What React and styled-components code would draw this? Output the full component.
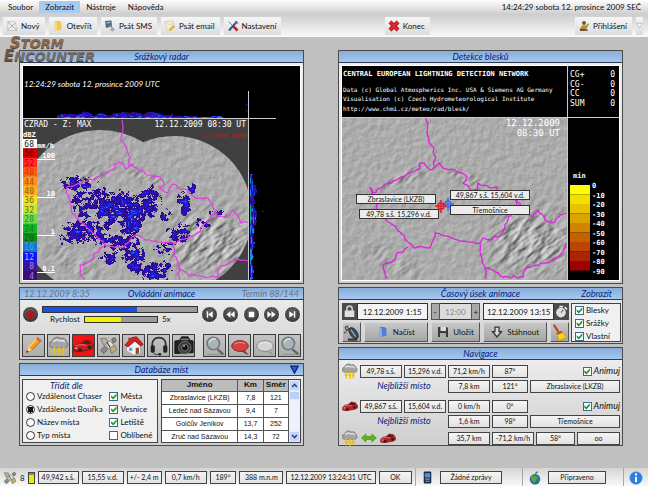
import React, { useState } from "react";
import styled, { createGlobalStyle, css } from "styled-components";

/* ---------- map data helpers ---------- */

const rand = (x, y) => {
  const n = Math.sin(x * 127.1 + y * 311.7) * 43758.5453;
  return n - Math.floor(n);
};

const noise = (x, y) => {
  const xi = Math.floor(x);
  const yi = Math.floor(y);
  const fx = x - xi;
  const fy = y - yi;
  const top = rand(xi, yi) * (1 - fx) + rand(xi + 1, yi) * fx;
  const bottom = rand(xi, yi + 1) * (1 - fx) + rand(xi + 1, yi + 1) * fx;
  return top * (1 - fy) + bottom * fy;
};

// turns a coarse border line into a ragged one
const border = (points) => {
  let d = `M${points[0][0]} ${points[0][1]}`;
  for (let i = 1; i < points.length; i++) {
    const [x0, y0] = points[i - 1];
    const [x1, y1] = points[i];
    const steps = Math.max(1, Math.round(Math.hypot(x1 - x0, y1 - y0) / 3));
    for (let s = 1; s <= steps; s++) {
      const t = s / steps;
      const wx = s < steps ? (rand(x0 + s, y1) - 0.5) * 2.4 : 0;
      const wy = s < steps ? (rand(x1, y0 + s) - 0.5) * 2.4 : 0;
      d += `L${(x0 + (x1 - x0) * t + wx).toFixed(1)} ${(y0 + (y1 - y0) * t + wy).toFixed(1)}`;
    }
  }
  return d;
};

const ECHO_COLORS = ["#2e0a86", "#2a12b0", "#1c1bdc", "#1f4cf0", "#1c90e0", "#18b080"];

// cx, cy, rx, ry, strength
const CELLS = [
  [84, 138, 20, 13, 0.78],
  [97, 143, 24, 14, 0.98],
  [107, 158, 9, 12, 0.95],
  [75, 130, 14, 9, 0.66],
  [56, 118, 16, 7, 0.74],
  [58, 136, 10, 13, 0.66],
  [60, 165, 21, 9, 0.88],
  [44, 172, 12, 5, 0.78],
  [88, 176, 15, 7, 0.76],
  [107, 174, 7, 7, 0.76],
  [126, 134, 10, 13, 0.84],
  [111, 192, 8, 13, 0.92],
  [130, 205, 15, 7, 0.82],
  [161, 136, 6, 10, 0.92],
  [155, 166, 11, 8, 0.76],
  [180, 157, 7, 5, 0.75],
  [193, 146, 6, 3, 0.75],
  [141, 181, 9, 6, 0.76],
  [140, 203, 6, 9, 0.74],
  [168, 122, 4, 4, 0.8],
  [140, 148, 6, 6, 0.7],
  [88, 192, 10, 6, 0.6],
];

const buildEchoes = () => {
  const paths = ECHO_COLORS.map(() => "");
  const put = (x, y, level) => {
    const i = Math.max(0, Math.min(ECHO_COLORS.length - 1, level));
    paths[i] += `M${x} ${y}h1v1h-1z`;
  };
  for (let y = 105; y < 214; y++) {
    for (let x = 35; x < 225; x++) {
      let value = 0;
      CELLS.forEach(([cx, cy, rx, ry, power]) => {
        const dist = ((x - cx) / rx) ** 2 + ((y - cy) / ry) ** 2;
        if (dist < 1.8) value = Math.max(value, power * (1 - dist * 0.4));
      });
      if (!value) continue;
      const v = value + noise(x / 3, y / 3) * 1.15 + rand(x, y) * 0.35 - 0.75;
      if (v > 0.55) put(x, y, Math.floor((v - 0.55) * 4.6));
    }
  }
  for (let x = 34; x < 200; x++) {
    const near = x < 150 ? 1 : 0.4;
    const h = Math.round((1 + noise(x / 5, 3) * 5 + rand(x, 9)) * near);
    for (let k = 0; k < h; k++) {
      put(x, 51 - k, Math.floor(noise(x / 3, k) * 5.4 - k * 0.6));
    }
  }
  for (let y = 108; y < 214; y++) {
    const near = y > 118 && y < 178 ? 1 : 0.55;
    const w = Math.round((2 + noise(2, y / 5) * 6 + rand(y, 4)) * near);
    for (let k = 0; k < w; k++) {
      put(227 + k, y, Math.floor(noise(k, y / 4) * 6.4 - k * 0.4));
    }
  }
  [[223, 38], [223, 39], [222, 43], [224, 44], [223, 45], [239, 145], [240, 145], [235, 139]].forEach(
    ([x, y]) => put(x, y, 1)
  );
  return paths;
};

const ECHOES = buildEchoes();

const RADAR_BORDERS = [
  [[99, 54], [100, 61], [98, 71], [102, 79], [107, 91], [106, 101], [103, 103], [101, 99], [99, 97], [91, 98], [92, 102], [89, 104], [74, 111], [61, 116], [44, 121], [43, 127], [47, 134], [49, 147], [59, 157], [74, 171], [82, 179], [101, 181], [112, 169], [127, 174], [138, 176], [151, 177], [165, 172], [175, 167], [180, 159], [188, 151], [195, 147]],
  [[82, 180], [72, 187], [69, 194], [57, 199], [57, 207], [61, 214]],
  [[106, 101], [109, 98], [116, 104], [127, 109], [137, 111], [141, 119], [136, 121], [144, 127], [150, 118], [155, 122], [165, 124], [171, 131], [185, 132], [190, 141], [193, 149], [205, 151], [210, 144], [216, 152], [218, 157], [225, 156]],
  [[151, 177], [151, 187], [156, 201], [158, 204], [168, 209], [181, 211], [195, 211], [196, 202], [215, 193], [225, 195]],
  [[156, 202], [156, 214]],
];

const LIGHTNING_BORDERS = [
  [[84, 52], [86, 57], [85, 67], [87, 77], [92, 82], [93, 94], [91, 103], [88, 104], [85, 101], [82, 97], [77, 98], [78, 102], [60, 111], [43, 119], [31, 127], [28, 121], [30, 129], [35, 137], [36, 147], [48, 157], [58, 166], [66, 176], [71, 181], [88, 182], [93, 167], [106, 170], [116, 174], [138, 177], [141, 172], [148, 174], [161, 167], [166, 154], [173, 141], [175, 134]],
  [[93, 102], [97, 97], [101, 102], [120, 107], [125, 111], [121, 117], [130, 125], [136, 123], [136, 117], [148, 122], [155, 121], [156, 126], [168, 128], [175, 136], [185, 147], [191, 151], [196, 144], [203, 154], [211, 157], [218, 149], [225, 147]],
  [[66, 181], [61, 186], [55, 187], [53, 194], [41, 199], [43, 207], [45, 213]],
  [[138, 177], [138, 187], [143, 202], [143, 213]],
  [[143, 202], [148, 203], [161, 211], [181, 211], [185, 201], [208, 196], [221, 186], [224, 177]],
];

const DBZ_SCALE = [
  ["68", "#ffffff", "#222"],
  ["56", "#d40000", "#6a0000"],
  ["52", "#ff2a2a", "#c00000"],
  ["48", "#ff5a14", "#c83c00"],
  ["44", "#ff9020", "#a85000"],
  ["40", "#ffb020", "#8a5a00"],
  ["36", "#f4e428", "#6e6a00"],
  ["32", "#c8e632", "#5c7800"],
  ["28", "#6cdc50", "#2c8c20"],
  ["24", "#18b428", "#088018"],
  ["20", "#109018", "#0a5c10"],
  ["16", "#1478c8", "#3ca0ff"],
  ["12", "#1414f0", "#b4b4ff"],
  ["8", "#3a12a0", "#a890e0"],
  ["4", "#3c0c78", "#a080d0"],
];

const AGE_COLORS = ["#ffff00", "#f4e000", "#e8c400", "#dca400", "#d08400", "#c46000", "#bc4400", "#ac2400", "#a00000"];

/* ---------- styles ---------- */

const GlobalStyle = createGlobalStyle`
  * {
    box-sizing: border-box;
  }
  body {
    margin: 0;
    background: #c0c0c0;
    color: #111;
    font-family: Lato, "Open Sans", sans-serif;
    font-size: 8px;
    line-height: 10px;
  }
  button, input, output, table {
    font: inherit;
    color: inherit;
  }
`;

const Page = styled.div`
  min-height: 100vh;
  display: flex;
  flex-direction: column;
`;

const Header = styled.header`
  position: relative;
`;

const MenuBar = styled.nav`
  display: flex;
  align-items: center;
  height: 14px;
  padding: 0 7px 0 2px;
  background: linear-gradient(#fdfdfd, #cfcfcf);
`;

const MenuItem = styled.a`
  padding: 1px 6px;
  color: #111;
  text-decoration: none;
  background: ${(p) => (p.$active ? "#a9cbf0" : "transparent")};
`;

const Clock = styled.time`
  margin-left: auto;
`;

const ToolBar = styled.div`
  display: flex;
  align-items: center;
  gap: 4px;
  height: 23px;
  padding: 0 5px 0 3px;
  background: linear-gradient(#cdcdcd, #fafafa);
`;

const ToolButton = styled.button`
  display: flex;
  align-items: center;
  justify-content: center;
  gap: 3px;
  height: 18px;
  padding: 0 5px 0 3px;
  border: 0;
  background: linear-gradient(#f6f6f6, #dcdcdc);
`;

const Spacer = styled.div`
  flex: ${(p) => p.$grow || 1};
`;

const MoreButton = styled(ToolButton)`
  padding: 0;
`;

const Logo = styled.div`
  position: absolute;
  top: 37px;
  left: 4px;
  z-index: 2;
  font: italic bold 13px/12px "DejaVu Sans", sans-serif;
  color: #8a6a4c;
  text-shadow: 0 1px 0 #4a423c;

  span {
    display: block;
  }
  b {
    font-size: 15px;
  }
  span:first-child {
    padding-left: 6px;
  }
  span + span {
    color: #77706a;
  }
  span + span b {
    color: #6c5644;
  }
`;

const Main = styled.main`
  flex: 1;
  display: grid;
  grid-template-columns: minmax(0, 1fr) minmax(0, 1fr);
  align-items: start;
  gap: 34px;
  padding: 13px 25px 22px 19px;
`;

const Column = styled.div`
  display: flex;
  flex-direction: column;
  gap: 3px;
`;

const Panel = styled.section`
  border: 1px solid #4a4a4a;
  background: linear-gradient(#f0f0f0, #cfcfcf);
`;

const TitleBar = styled.header`
  display: grid;
  grid-template-columns: 1fr auto 1fr;
  align-items: center;
  height: 12px;
  padding: 0 4px;
  border-bottom: 1px solid #2c3c54;
  background: linear-gradient(#86add8, #a6c8f0);
  color: #66748a;
  font-size: 9px;
  font-style: italic;

  > :last-child {
    justify-self: end;
  }
`;

const Title = styled.h2`
  grid-column: 2;
  margin: 0;
  color: #0c1c78;
  font: inherit;
`;

const TitleNote = styled.span`
  padding-right: ${(p) => (p.$strong ? "6px" : 0)};
  color: ${(p) => (p.$strong ? "#0c1c78" : "inherit")};
`;

const CollapseButton = styled.button`
  display: flex;
  padding: 0;
  border: 0;
  background: none;
`;

const MapFrame = styled.div`
  position: relative;
  margin: 2px;
  border: 1px solid #fff;
  background: #000;

  svg {
    display: block;
    width: 100%;
    height: auto;
  }
`;

const MapClock = styled.time`
  position: absolute;
  top: 13px;
  left: 1px;
  color: #fff;
  font-style: italic;
`;

const MapLabel = styled.span`
  position: absolute;
  left: ${(p) => p.$x}%;
  top: ${(p) => p.$y}%;
  width: 29%;
  height: 10px;
  border: 1px solid #333;
  background: #ececec;
  font-size: 7px;
  line-height: 8px;
  text-align: center;
  white-space: nowrap;
`;

/* animation */

const PlayerTop = styled.div`
  display: flex;
  align-items: center;
  gap: 3px;
  padding: 6px 2px 5px;
`;

const Tracks = styled.div`
  flex: 1;
  display: flex;
  flex-direction: column;
  gap: 2px;
`;

const SpeedRow = styled.label`
  display: flex;
  align-items: center;
  gap: 4px;
  height: 8px;
  padding-left: 8px;
`;

const Track = styled.input`
  appearance: none;
  flex: none;
  width: ${(p) => p.$width};
  height: 7px;
  margin: 0;
  border: 1px solid #333;
  background: linear-gradient(${(p) => p.$color}, ${(p) => p.$color}) no-repeat, #9c9c9c;
  background-size: ${(p) => (p.value / p.max) * 100}% 100%, auto;

  &::-webkit-slider-thumb {
    appearance: none;
    width: 0;
    height: 0;
  }
`;

const RoundButton = styled.button`
  flex: none;
  display: flex;
  align-items: center;
  justify-content: center;
  width: 17px;
  height: 17px;
  padding: 0;
  border: 1px solid #eee;
  border-radius: 50%;
  background: radial-gradient(circle at 50% 35%, #666, #2a2a2a);
`;

const Transport = styled.div`
  display: flex;
  justify-content: space-between;
  width: 100px;
`;

const IconBar = styled.div`
  display: flex;
  justify-content: space-between;
  padding: 6px 2px 2px;
`;

const IconGroup = styled.div`
  display: flex;
  gap: 2px;
`;

const IconButton = styled.button`
  display: flex;
  align-items: center;
  justify-content: center;
  width: 23px;
  height: 23px;
  padding: 0;
  border: 1px solid #3c3c3c;
  background: ${(p) => (p.$active ? "#f01414" : "linear-gradient(#c4c4c4, #adadad)")};
`;

/* places */

const Places = styled.div`
  display: grid;
  grid-template-columns: 137fr 141fr;
  gap: 3px;
  padding: 3px 2px 2px;
`;

const Box = styled.div`
  border: 1px solid #444;
  background: ${(p) => p.$bg || "#f0f0f0"};
`;

const SortBox = styled(Box)`
  display: grid;
  grid-template-columns: 84fr 51fr;
  align-content: start;
`;

const Group = styled.fieldset`
  display: flex;
  flex-direction: column;
  gap: 3px;
  min-width: 0;
  margin: 0;
  padding: ${(p) => p.$pad || "11px 0 0 3px"};
  border: 0;
`;

const Legend = styled.legend`
  float: left;
  height: 8px;
  padding: 1px 0 0 24px;
  color: #0c1c78;
  font-size: 9px;
  font-style: italic;
`;

const Option = styled.label`
  display: flex;
  align-items: center;
  gap: 2px;
  height: 10px;
  white-space: nowrap;
  font-size: ${(p) => (p.$italic ? "9px" : "8px")};
  font-style: ${(p) => (p.$italic ? "italic" : "normal")};
`;

const RadioInput = styled.input`
  appearance: none;
  flex: none;
  width: 9px;
  height: 9px;
  margin: 0;
  border: 1px solid #333;
  border-radius: 50%;
  background: #fff;

  &:checked {
    background: radial-gradient(circle, #111 0 3px, #fff 3px);
  }
`;

const CheckInput = styled.input`
  appearance: none;
  flex: none;
  width: 9px;
  height: 9px;
  margin: 0;
  border: 1px solid #3a6a90;
  background: #fff;

  &:checked::before {
    content: "";
    display: block;
    height: 7px;
    background: #1c9a2c;
    clip-path: polygon(10% 40%, 40% 65%, 90% 10%, 90% 45%, 40% 100%, 10% 70%);
  }
`;

const TableBox = styled(Box)`
  display: flex;
  height: 64px;
  overflow: hidden;
`;

const PlaceTable = styled.table`
  flex: 1;
  table-layout: fixed;
  border-collapse: collapse;
  font: 7px/8px "Liberation Sans", Arial, sans-serif;
  text-align: center;

  th,
  td {
    height: 13px;
    padding: 0;
    border-right: 1px solid #555;
    border-bottom: 1px solid #555;
    white-space: nowrap;
  }
  th {
    width: 20%;
    height: 11px;
    background: #bcbcbc;
    font-size: 8px;
  }
  th:first-child {
    width: 60%;
  }
`;

const ScrollBar = styled.div`
  display: flex;
  flex-direction: column;
  width: 11px;
  background: #eef1fa;
`;

const ScrollButton = styled.button`
  display: flex;
  align-items: center;
  justify-content: center;
  height: 11px;
  padding: 0;
  border: 1px solid #e4ecff;
  background: #c4d4fa;
`;

const ScrollThumb = styled.div`
  height: 9px;
  margin-bottom: auto;
  border: 1px solid #e4ecff;
  background: #bccffa;
`;

/* time range */

const RangeBody = styled.div`
  display: grid;
  grid-template-columns: 1fr 50px;
  gap: 2px;
  padding: 3px 1px 1px 3px;
`;

const RangeGrid = styled.div`
  display: grid;
  grid-template-columns: 86fr 50fr 86fr;
  grid-template-rows: 17px 20px;
  gap: 2px 3px;
`;

const Cell = styled.div`
  display: flex;
  gap: ${(p) => p.$gap || 0};
  min-width: 0;
`;

const DateInput = styled.input`
  flex: 1;
  min-width: 0;
  padding: 0;
  border: 1px solid #333;
  background: #f4f4f4;
  font-size: 8px;
  text-align: center;

  &:disabled {
    border-width: 1px 0;
    color: #888;
    background: #dcdcdc;
  }
`;

const DarkButton = styled.button`
  display: flex;
  align-items: center;
  justify-content: center;
  width: 15px;
  padding: 0;
  border: 0;
  background: #4c4c4c;
`;

const StepButton = styled.button`
  width: 9px;
  padding: 0;
  border: 1px solid #555;
  background: #a8a8a8;
`;

const ActionButton = styled.button`
  flex: ${(p) => (p.$square ? "0 0 19px" : "1")};
  display: flex;
  align-items: center;
  justify-content: center;
  gap: 4px;
  min-width: 0;
  padding: 0;
  border: 1px solid;
  border-color: #d8d8d8 #555 #555 #d8d8d8;
  background: linear-gradient(#c8c8c8, #a4a4a4);
`;

/* navigation */

const NavBody = styled.div`
  display: flex;
  flex-direction: column;
  gap: 2px;
  padding: 3px 2px 1px 3px;
`;

const NavRow = styled.div`
  display: grid;
  grid-template-columns: ${(p) => p.$columns || "16fr 42fr 42fr 42fr 36fr 90fr"};
  align-items: center;
  gap: 2px;
  height: 14px;
  margin-top: ${(p) => (p.$first ? "3px" : 0)};
`;

const NavIcon = styled.div`
  display: flex;
  align-items: center;
  gap: 3px;
`;

const NavCaption = styled.span`
  grid-column: span 3;
  padding-left: 20px;
  text-align: center;
  color: #0c1c78;
  font-size: 9px;
  font-style: italic;
`;

const readout = css`
  min-width: 0;
  height: 13px;
  border: 1px solid #444;
  background: linear-gradient(#f4f4f4, #e2e2e2);
  font-size: 7px;
  line-height: 11px;
  text-align: center;
  white-space: nowrap;
`;

const Readout = styled.output`
  ${readout}
  display: block;
`;

const RightOption = styled(Option)`
  justify-self: end;
`;

/* status bar */

const StatusBar = styled.footer`
  display: flex;
  height: 19px;
  background: linear-gradient(#d4d4d4, #fbfbfb);
`;

const StatusGroup = styled.div`
  display: flex;
  align-items: center;
  gap: 3px;
  flex: ${(p) => p.$flex || "none"};
  padding: 0 ${(p) => (p.$divided ? "5px" : "3px")};
  border-left: ${(p) => (p.$divided ? "1px solid #a8a8a8" : 0)};
`;

const StatusField = styled.output`
  ${readout}
  flex: ${(p) => p.$w} 1 0;
  max-width: ${(p) => p.$max || "none"};
  margin-left: ${(p) => (p.$max ? "3px" : 0)};
`;

const Battery = styled.div`
  width: 7px;
  height: 12px;
  border: 1px solid #444;
  background: linear-gradient(#888 20%, #f0e800 20%);
`;

/* ---------- icons ---------- */

const Icon = ({ size = 12, width, children }) => (
  <svg width={width || size} height={size} viewBox={`0 0 ${width ? (24 * width) / size : 24} 24`} fill="none" aria-hidden="true">
    {children}
  </svg>
);

const StormIcon = ({ size = 18 }) => (
  <Icon size={size}>
    <path d="M5 14a4 4 0 0 1-1-8 6 6 0 0 1 10-3 5 5 0 0 1 7 4 4 4 0 0 1-1 7z" fill="#a4a4a4" stroke="#6c6c6c" />
    <path d="M5 7a5 4 0 0 1 8-1 5 4 0 0 1 6 1" stroke="#e2e2e2" strokeWidth="2" />
    <path d="M7 13l-2 5h2l-1 5M13 13l-3 5h3l-1 6M18 13l-2 5h2l-2 5" stroke="#e8c010" strokeWidth="2" />
  </Icon>
);

const CarIcon = ({ size = 18 }) => (
  <Icon size={size}>
    <path d="M1 14l3-3 5-1 5-4 6 1 3 4v4l-4 2-13 2-5-1z" fill="#c81c1c" stroke="#701010" />
    <path d="M10 10l4-3 5 1 1 2z" fill="#3a2020" />
    <path d="M3 12l7-1 5 1" stroke="#ff8080" />
    <circle cx="8" cy="17" r="2" fill="#222" />
    <circle cx="19" cy="14" r="2" fill="#222" />
    <path d="M2 15h3" stroke="#fff" />
  </Icon>
);

const PencilIcon = () => (
  <Icon size={19}>
    <path d="M3 21l2-7L17 2l5 4L10 18z" fill="#f59a20" stroke="#9a5c14" />
    <path d="M5 15L17 3" stroke="#ffd078" strokeWidth="2" />
    <path d="M17 2l5 4-2 2-5-4z" fill="#d86464" />
    <path d="M3 21l2-7 5 4z" fill="#f4dcb0" />
    <path d="M3 21l1-3 2 2z" fill="#222" />
  </Icon>
);

const SatelliteIcon = ({ size = 19 }) => (
  <Icon size={size}>
    <path d="M2 3l7 0 3 6-6 3z" fill="#b8b098" stroke="#77715f" />
    <path d="M13 14l7-2 2 6-6 4z" fill="#c0ac78" stroke="#77715f" />
    <path d="M8 10l6-4 5 6-7 4z" fill="#e8e4d8" stroke="#777" />
    <path d="M16 4l4-2 2 4-4 3zM7 13l-5 5 4 4 5-5z" fill="#8a8a8a" stroke="#555" />
    <path d="M10 8l4 6" stroke="#444" strokeWidth="1.5" />
  </Icon>
);

const HouseIcon = () => (
  <Icon size={20}>
    <path d="M3 11l9-6 8 5v11l-8 2-9-5z" fill="#f4f4f4" stroke="#999" />
    <path d="M1 11l8-9 6-1 8 9-3 2-7-6-8 7z" fill="#d82020" stroke="#8a1010" />
    <path d="M6 14h4v4H6z" fill="#7aa0c8" />
    <path d="M14 14h4v7l-4 1z" fill="#8c5030" />
    <path d="M5 2h3v4H5z" fill="#b04030" />
  </Icon>
);

const HeadsetIcon = () => (
  <Icon size={20}>
    <path d="M4 13C3 5 7 2 12 2s9 3 8 11" stroke="#333" strokeWidth="2" />
    <rect x="2" y="11" width="5" height="9" rx="2" fill="#222" />
    <rect x="17" y="11" width="5" height="9" rx="2" fill="#222" />
    <path d="M5 20c2 3 5 2 8 2" stroke="#222" />
    <circle cx="13" cy="22" r="1.6" fill="#222" />
  </Icon>
);

const CameraIcon = () => (
  <Icon size={20}>
    <path d="M1 6l6-1 2-4h8l2 4 4 1v14l-22 1z" fill="#222" stroke="#111" />
    <path d="M9 3h8l1 2H8z" fill="#777" />
    <circle cx="13" cy="14" r="7.5" fill="#3c3c3c" stroke="#777" />
    <circle cx="13" cy="14" r="4" fill="#111" stroke="#888" />
    <circle cx="12" cy="12" r="1.3" fill="#9ab" />
  </Icon>
);

const LensIcon = () => (
  <Icon size={20}>
    <path d="M15 16l7 6" stroke="#666" strokeWidth="3" />
    <circle cx="10" cy="9" r="7.5" fill="#a9b4b8" stroke="#76797c" strokeWidth="2" />
    <path d="M5 8a6 6 0 0 1 8-4" stroke="#d4dcde" strokeWidth="2" />
    <path d="M3 22h17" stroke="#8a8a8a" />
  </Icon>
);

const BubbleIcon = ({ color, line }) => (
  <Icon size={20}>
    <path d="M17 17l4 5-7-4z" fill={color} stroke={line} />
    <ellipse cx="12" cy="12" rx="10" ry="6.5" fill={color} stroke={line} />
    <path d="M5 10a9 5 0 0 1 13-1" stroke="#fff" opacity="0.5" />
  </Icon>
);

const NewIcon = () => (
  <Icon>
    <path d="M4 3h14l4 18H3z" fill="#eee" stroke="#aaa" />
    <path d="M3 3l18 17M4 20L18 6" stroke="#8c98a4" strokeWidth="1.5" />
  </Icon>
);

const FolderIcon = ({ color = "#f0c850" }) => (
  <Icon>
    <path d="M5 2h10l4 3v14l-10 3-4-3z" fill={color} />
    <path d="M5 2l5 4v16l-5-3z" fill="#fff" opacity="0.35" />
  </Icon>
);

const SmsIcon = () => (
  <Icon>
    <path d="M2 2l13-1 1 12-12 3z" fill="#4a6c84" />
    <path d="M5 6l8-1" stroke="#b8d0dc" strokeWidth="2" />
    <path d="M11 11l10 9M13 18l5 4" stroke="#999" strokeWidth="3" />
  </Icon>
);

const EmailIcon = () => (
  <Icon>
    <path d="M1 3l16-2 4 14-14 7z" fill="#f4ecd8" stroke="#c8bca0" />
    <path d="M2 4l11 6 5-8" stroke="#c8bca0" />
    <path d="M9 20l9-10 4 3-9 9z" fill="#e0b040" />
  </Icon>
);

const ToolsIcon = () => (
  <Icon>
    <path d="M3 3l10 10" stroke="#7c8490" strokeWidth="2" />
    <path d="M13 13l8 8" stroke="#c02020" strokeWidth="5" />
    <path d="M20 3L4 21" stroke="#2c54a8" strokeWidth="4" />
    <path d="M16 2l3 5 4-1" stroke="#888" strokeWidth="2" />
  </Icon>
);

const CrossIcon = () => (
  <Icon>
    <path d="M4 4l16 16M20 4L4 20" stroke="#a01010" strokeWidth="8" />
    <path d="M4 4l16 16M20 4L4 20" stroke="#e02828" strokeWidth="5" />
  </Icon>
);

const UserIcon = () => (
  <Icon>
    <circle cx="12" cy="6" r="4" fill="#7a5a28" />
    <path d="M3 19l5-8h8l5-5 1 3-5 8-9 5z" fill="#b88c28" />
    <path d="M4 20h15" stroke="#4a3818" strokeWidth="3" />
  </Icon>
);

const LockIcon = () => (
  <Icon size={13}>
    <path d="M7 11V7a5 5 0 0 1 10 0v4" stroke="#ccc" strokeWidth="3" />
    <rect x="3" y="10" width="18" height="12" rx="1" fill="#e0e0e0" />
  </Icon>
);

const WatchIcon = () => (
  <Icon size={13}>
    <circle cx="11" cy="14" r="9" fill="#ddd" />
    <path d="M11 14l4-5" stroke="#666" strokeWidth="2" />
    <path d="M8 3h7M18 4l4 4" stroke="#eee" strokeWidth="3" />
  </Icon>
);

const DishIcon = () => (
  <Icon size={17}>
    <ellipse cx="15" cy="13" rx="5" ry="9" transform="rotate(-35 15 13)" fill="#3a4654" stroke="#222" />
    <path d="M3 5l3-2 2 4-3 2zM7 10l4-2M1 13l4-2" stroke="#444" strokeWidth="1.5" />
    <path d="M11 8l7 10" stroke="#8fa4b4" strokeWidth="2" />
    <path d="M7 22h13" stroke="#333" strokeWidth="3" />
  </Icon>
);

const DiskIcon = () => (
  <Icon>
    <path d="M2 2h18l2 3v17H2z" fill="#3a3a3a" />
    <path d="M7 2h11v8H7z" fill="#ddd" />
    <path d="M6 14h12v8H6z" fill="#aaa" />
  </Icon>
);

const DownIcon = () => (
  <Icon>
    <path d="M8 2h8v9h5l-9 11-9-11h5z" fill="#ddd" stroke="#333" strokeWidth="2.5" />
  </Icon>
);

const BroomIcon = () => (
  <Icon size={17}>
    <path d="M4 1l7 11" stroke="#b04020" strokeWidth="3" />
    <path d="M8 13l7-3 7 9-11 5z" fill="#f4d420" stroke="#b09010" />
    <path d="M8 13l7-3 1 2-7 3z" fill="#d83020" />
  </Icon>
);

const ArrowsIcon = () => (
  <Icon size={10} width={16}>
    <path d="M1 12L12 2v6h14V2l11 10-11 10v-6H12v6z" fill="#5cb41c" stroke="#3c7c10" />
  </Icon>
);

const PhoneIcon = () => (
  <Icon size={13}>
    <rect x="5" y="1" width="14" height="22" rx="2" fill="#1c2c44" />
    <path d="M7 4h10v8H7z" fill="#4a94d0" />
    <path d="M8 15h8M8 19h8" stroke="#8aa0b8" strokeWidth="2" />
  </Icon>
);

const GlobeIcon = () => (
  <Icon size={14}>
    <circle cx="12" cy="14" r="9" fill="#1c64b4" />
    <path d="M5 9c4-3 6 0 9-1l4 3-3 4-4 6-5-4zM17 15l3-2-2 6z" fill="#58a838" />
    <path d="M12 5c0-3 3-4 5-4 0 3-2 4-5 4z" fill="#3c8c20" />
  </Icon>
);

const InfoIcon = () => (
  <Icon size={14}>
    <circle cx="12" cy="12" r="11" fill="#2c7ce0" stroke="#8cb8f0" />
    <circle cx="12" cy="6" r="2" fill="#fff" />
    <path d="M12 10v9" stroke="#fff" strokeWidth="3.5" />
  </Icon>
);

const TRANSPORT = [
  ["Začátek", "M6 5h3v14H6zM19 5v14L9 12z"],
  ["Zpět", "M12 5v14L3 12zM21 5v14l-9-7z"],
  ["Stop", "M6 6h12v12H6z"],
  ["Vpřed", "M3 5l9 7-9 7zM12 5l9 7-9 7z"],
  ["Konec animace", "M5 5l10 7-10 7zM15 5h3v14h-3z"],
];

/* ---------- maps ---------- */

const Relief = ({ id }) => (
  <defs>
    {[["low", 0.16, 0.16, 0.35], ["high", 0.06, 0.17, 2.2]].map(([name, fx, fy, scale]) => (
      <filter key={name} id={`${id}-${name}`} x="0" y="0" width="1" height="1" colorInterpolationFilters="sRGB">
        <feTurbulence type="fractalNoise" baseFrequency={`${fx} ${fy}`} numOctaves="3" seed="7" />
        <feDiffuseLighting surfaceScale={scale} diffuseConstant="0.95" lightingColor="#fff">
          <feDistantLight azimuth="225" elevation="45" />
        </feDiffuseLighting>
      </filter>
    ))}
    <radialGradient id={`${id}-fade`}>
      <stop offset="0.3" stopColor="#fff" />
      <stop offset="1" stopColor="#000" />
    </radialGradient>
    <mask id={`${id}-hills`}>
      <ellipse cx="190" cy="175" rx="66" ry="46" fill={`url(#${id}-fade)`} />
      <ellipse cx="62" cy="112" rx="46" ry="10" transform="rotate(-22 62 112)" fill={`url(#${id}-fade)`} opacity="0.7" />
      <ellipse cx="50" cy="195" rx="50" ry="18" transform="rotate(25 50 195)" fill={`url(#${id}-fade)`} opacity="0.5" />
      <ellipse cx="125" cy="112" rx="30" ry="10" transform="rotate(20 125 112)" fill={`url(#${id}-fade)`} opacity="0.7" />
    </mask>
    <clipPath id={`${id}-area`}>
      <rect y="52" width="225" height="162" />
    </clipPath>
  </defs>
);

const Terrain = ({ id }) => (
  <g clipPath={`url(#${id}-area)`}>
    <rect y="52" width="225" height="162" filter={`url(#${id}-low)`} />
    <g mask={`url(#${id}-hills)`}>
      <rect x="-50" y="0" width="350" height="280" transform="rotate(-35 112 133)" filter={`url(#${id}-high)`} />
    </g>
  </g>
);

const MONO = { fontFamily: '"DejaVu Sans Mono", monospace' };

const RadarMap = () => (
  <svg viewBox="0 0 277 214" {...MONO} fontSize="8" fill="#fff" role="img" aria-label="Srážkový radar">
    <Relief id="radar" />
    <clipPath id="range">
      <circle cx="77" cy="146" r="82" />
      <circle cx="151" cy="148" r="78" />
    </clipPath>
    <rect width="277" height="214" fill="#000" />
    <rect y="53" width="225" height="161" fill="#404040" />
    <g clipPath="url(#range)">
      <Terrain id="radar" />
    </g>
    {ECHOES.map((d, i) => (
      <path key={i} d={d} fill={ECHO_COLORS[i]} shapeRendering="crispEdges" />
    ))}
    {RADAR_BORDERS.map((points, i) => (
      <path key={i} d={border(points)} fill="none" stroke="#e838e8" strokeWidth="1.2" />
    ))}
    <path d="M0 52.5H253M225.5 25V214" stroke="#ccc" />
    <text x="1" y="61">CZRAD - Z: MAX</text>
    <text x="223" y="61" textAnchor="end">12.12.2009 08:30 UT</text>
    <text x="223" y="72" textAnchor="end" fill="#d01010" fontSize="6">(c)2009 ČHMÚ</text>
    {DBZ_SCALE.map(([value, fill, ink], i) => (
      <g key={value}>
        <rect y={73 + i * 9.4} width="14" height="9.4" fill={fill} />
        <text x="11" y={81 + i * 9.4} textAnchor="end" fill={ink}>{value}</text>
      </g>
    ))}
    <g fontSize="7" fontWeight="bold">
      <text x="0" y="71">dBZ</text>
      <text x="14" y="82">mm/h</text>
      {[["100", 93], ["10", 131], ["1", 169], ["0.1", 206]].map(([value, y]) => (
        <g key={value}>
          <path d={`M14 ${y}.5H32`} stroke="#fff" />
          <text x="32" y={y - 1} textAnchor="end">{value}</text>
        </g>
      ))}
    </g>
  </svg>
);

const Marker = ({ x, y, color }) => (
  <g stroke={color} fill="none">
    <circle cx={x} cy={y} r="3" strokeWidth="1.5" />
    <path d={`M${x - 6} ${y}h12M${x} ${y - 6}v13`} strokeWidth="1.5" />
  </g>
);

const LightningMap = () => (
  <svg viewBox="0 0 277 214" {...MONO} fontSize="6" fill="#fff" role="img" aria-label="Detekce blesků">
    <Relief id="storm" />
    <rect width="277" height="214" fill="#000" />
    <Terrain id="storm" />
    {LIGHTNING_BORDERS.map((points, i) => (
      <path key={i} d={border(points)} fill="none" stroke="#e020e0" strokeWidth="1.3" />
    ))}
    <path d="M0 51.5H277M225.5 0V214" stroke="#ccc" />
    <text x="1" y="10" fontSize="7" fontWeight="bold">CENTRAL EUROPEAN LIGHTNING DETECTION NETWORK</text>
    <text x="1" y="26">Data (c) Global Atmospherics Inc. USA &amp; Siemens AG Germany</text>
    <text x="1" y="35">Visualisation (c) Czech Hydrometeorological Institute</text>
    <text x="1" y="45">http://www.chmi.cz/meteo/rad/blesk/</text>
    <g fontSize="9" textAnchor="end">
      <text x="218" y="60">12.12.2009</text>
      <text x="218" y="70">08:30 UT</text>
    </g>
    {["CG+", "CG-", "CC", "SUM"].map((name, i) => (
      <g key={name} fontSize="8">
        <text x="228" y={11 + i * 9.5}>{name}</text>
        <text x="273" y={11 + i * 9.5} textAnchor="end">0</text>
      </g>
    ))}
    <g fontSize="7" fontWeight="bold">
      <text x="231" y="112">min</text>
      {AGE_COLORS.map((color, i) => (
        <rect key={color} x="228" y={119 + i * 9.5} width="20" height="9.5" fill={color} />
      ))}
      {[0, 1, 2, 3, 4, 5, 6, 7, 8, 9].map((n) => (
        <text key={n} x="250" y={122 + n * 9.5}>{n ? -n * 10 : 0}</text>
      ))}
    </g>
    <Marker x={106} y={138} color="#3c6cf0" />
    <Marker x={99} y={140} color="#f01818" />
  </svg>
);

/* ---------- panels ---------- */

const RadarPanel = () => (
  <Panel>
    <TitleBar>
      <Title>Srážkový radar</Title>
    </TitleBar>
    <MapFrame>
      <RadarMap />
      <MapClock>12:24:29 sobota 12. prosince 2009 UTC</MapClock>
    </MapFrame>
  </Panel>
);

const LightningPanel = () => (
  <Panel>
    <TitleBar>
      <Title>Detekce blesků</Title>
    </TitleBar>
    <MapFrame>
      <LightningMap />
      <MapLabel $x={5} $y={60}>Zbraslavice (LKZB)</MapLabel>
      <MapLabel $x={6} $y={67}>49,78 s.š. 15,296 v.d.</MapLabel>
      <MapLabel $x={39} $y={58}>49,867 s.š. 15,604 v.d.</MapLabel>
      <MapLabel $x={39} $y={65}>Třemošnice</MapLabel>
    </MapFrame>
  </Panel>
);

const AnimationPanel = () => {
  const [position, setPosition] = useState(88);
  const [speed, setSpeed] = useState(5);

  return (
    <Panel>
      <TitleBar>
        <TitleNote>12.12.2009 8:35</TitleNote>
        <Title>Ovládání animace</Title>
        <TitleNote>Termín {position}/144</TitleNote>
      </TitleBar>
      <PlayerTop>
        <RoundButton aria-label="Nahrávat">
          <Icon size={11}><circle cx="12" cy="12" r="9" fill="#b81414" /></Icon>
        </RoundButton>
        <Tracks>
          <Track type="range" aria-label="Pozice" max={144} value={position} $width="100%" $color="#1c50e0"
            onChange={(e) => setPosition(Number(e.target.value))} />
          <SpeedRow>
            Rychlost
            <Track type="range" max={10} value={speed} $width="50%" $color="#f0f000"
              onChange={(e) => setSpeed(Number(e.target.value))} />
            {speed}x
          </SpeedRow>
        </Tracks>
        <Transport>
          {TRANSPORT.map(([name, d]) => (
            <RoundButton key={name} aria-label={name}>
              <Icon size={11}><path d={d} fill="#fff" /></Icon>
            </RoundButton>
          ))}
        </Transport>
      </PlayerTop>
      <IconBar>
        <IconGroup>
          <IconButton aria-label="Kreslit"><PencilIcon /></IconButton>
          <IconButton aria-label="Bouřka"><StormIcon size={20} /></IconButton>
          <IconButton aria-label="Chaser" $active><CarIcon size={21} /></IconButton>
          <IconButton aria-label="Družice"><SatelliteIcon /></IconButton>
          <IconButton aria-label="Domů"><HouseIcon /></IconButton>
          <IconButton aria-label="Sluchátka"><HeadsetIcon /></IconButton>
          <IconButton aria-label="Foto"><CameraIcon /></IconButton>
        </IconGroup>
        <IconGroup>
          <IconButton aria-label="Lupa"><LensIcon /></IconButton>
          <IconButton aria-label="Hlášení"><BubbleIcon color="#d84040" line="#7a1c1c" /></IconButton>
          <IconButton aria-label="Zpráva"><BubbleIcon color="#d4d4d4" line="#808080" /></IconButton>
          <IconButton aria-label="Hledat"><LensIcon /></IconButton>
        </IconGroup>
      </IconBar>
    </Panel>
  );
};

const PLACES = [
  ["Zbraslavice (LKZB)", "7,8", "121"],
  ["Ledeč nad Sázavou", "9,4", "7"],
  ["Golčův Jeníkov", "13,7", "252"],
  ["Zruč nad Sázavou", "14,3", "72"],
];

const PlacesPanel = () => (
  <Panel>
    <TitleBar>
      <Title>Databáze míst</Title>
      <CollapseButton aria-label="Sbalit">
        <Icon size={9}><path d="M2 3h20l-10 19z" fill="#2c5cc8" stroke="#0c1c78" strokeWidth="3" /></Icon>
      </CollapseButton>
    </TitleBar>
    <Places>
      <SortBox>
        <Group $pad="0 0 0 3px">
          <Legend>Třídit dle</Legend>
          {["Vzdálenost Chaser", "Vzdálenost Bouřka", "Název místa", "Typ místa"].map((name, i) => (
            <Option key={name}>
              <RadioInput type="radio" name="sort" defaultChecked={i === 1} />
              {name}
            </Option>
          ))}
        </Group>
        <Group aria-label="Kategorie">
          {["Města", "Vesnice", "Letiště", "Oblíbené"].map((name, i) => (
            <Option key={name}>
              <CheckInput type="checkbox" defaultChecked={i < 3} />
              {name}
            </Option>
          ))}
        </Group>
      </SortBox>
      <TableBox $bg="#fff">
        <PlaceTable>
          <thead>
            <tr>
              <th>Jméno</th>
              <th>Km</th>
              <th>Směr</th>
            </tr>
          </thead>
          <tbody>
            {PLACES.map(([name, km, dir]) => (
              <tr key={name}>
                <td>{name}</td>
                <td>{km}</td>
                <td>{dir}</td>
              </tr>
            ))}
          </tbody>
        </PlaceTable>
        <ScrollBar>
          <ScrollButton aria-label="Nahoru">
            <Icon size={7}><path d="M4 17l8-9 8 9" stroke="#26407c" strokeWidth="5" /></Icon>
          </ScrollButton>
          <ScrollThumb />
          <ScrollButton aria-label="Dolů">
            <Icon size={7}><path d="M4 7l8 9 8-9" stroke="#26407c" strokeWidth="5" /></Icon>
          </ScrollButton>
        </ScrollBar>
      </TableBox>
    </Places>
  </Panel>
);

const RangePanel = () => (
  <Panel>
    <TitleBar>
      <Title>Časový úsek animace</Title>
      <TitleNote $strong>Zobrazit</TitleNote>
    </TitleBar>
    <RangeBody>
      <RangeGrid>
        <Cell>
          <DarkButton aria-label="Zamknout"><LockIcon /></DarkButton>
          <DateInput aria-label="Od" defaultValue="12.12.2009 1:15" />
        </Cell>
        <Cell>
          <StepButton aria-label="Méně">-</StepButton>
          <DateInput aria-label="Délka" defaultValue="12:00" disabled />
          <StepButton aria-label="Více">+</StepButton>
        </Cell>
        <Cell>
          <DateInput aria-label="Do" defaultValue="12.12.2009 13:15" />
          <DarkButton aria-label="Aktuální čas"><WatchIcon /></DarkButton>
        </Cell>
        <Cell $gap="3px">
          <ActionButton $square aria-label="Příjem"><DishIcon /></ActionButton>
          <ActionButton><FolderIcon color="#4a80d8" />Načíst</ActionButton>
        </Cell>
        <Cell>
          <ActionButton><DiskIcon />Uložit</ActionButton>
        </Cell>
        <Cell $gap="3px">
          <ActionButton><DownIcon />Stáhnout</ActionButton>
          <ActionButton $square aria-label="Vymazat"><BroomIcon /></ActionButton>
        </Cell>
      </RangeGrid>
      <Box>
        <Group $pad="1px 0 0 3px" aria-label="Zobrazit">
          {["Blesky", "Srážky", "Vlastní"].map((name) => (
            <Option key={name}>
              <CheckInput type="checkbox" defaultChecked />
              {name}
            </Option>
          ))}
        </Group>
      </Box>
    </RangeBody>
  </Panel>
);

const Animate = () => (
  <RightOption $italic>
    <CheckInput type="checkbox" defaultChecked />
    Animuj
  </RightOption>
);

const NavigationPanel = () => (
  <Panel>
    <TitleBar>
      <Title>Navigace</Title>
    </TitleBar>
    <NavBody>
      <NavRow>
        <NavIcon><StormIcon size={16} /></NavIcon>
        <Readout>49,78 s.š.</Readout>
        <Readout>15,296 v.d.</Readout>
        <Readout>71,2 km/h</Readout>
        <Readout>87°</Readout>
        <Animate />
      </NavRow>
      <NavRow>
        <NavCaption>Nejbližší místo</NavCaption>
        <Readout>7,8 km</Readout>
        <Readout>121°</Readout>
        <Readout>Zbraslavice (LKZB)</Readout>
      </NavRow>
      <NavRow $first>
        <NavIcon><CarIcon size={16} /></NavIcon>
        <Readout>49,867 s.š.</Readout>
        <Readout>15,604 v.d.</Readout>
        <Readout>0 km/h</Readout>
        <Readout>0°</Readout>
        <Animate />
      </NavRow>
      <NavRow>
        <NavCaption>Nejbližší místo</NavCaption>
        <Readout>1,6 km</Readout>
        <Readout>98°</Readout>
        <Readout>Třemošnice</Readout>
      </NavRow>
      <NavRow $columns="104fr 42fr 42fr 39fr 43fr">
        <NavIcon>
          <StormIcon size={16} />
          <ArrowsIcon />
          <CarIcon size={16} />
        </NavIcon>
        <Readout>35,7 km</Readout>
        <Readout>-71,2 km/h</Readout>
        <Readout>58°</Readout>
        <Readout>oo</Readout>
      </NavRow>
    </NavBody>
  </Panel>
);

const GPS_FIELDS = [
  ["49,942 s.š.", 41],
  ["15,55 v.d.", 42],
  ["+/- 2,4 m", 35],
  ["0,7 km/h", 42],
  ["189°", 26],
  ["388 m.n.m", 44],
  ["12.12.2009 13:24:31 UTC", 92],
  ["OK", 33],
];

const App = () => (
  <Page>
    <GlobalStyle />
    <Header>
      <MenuBar>
        <MenuItem href="#soubor">Soubor</MenuItem>
        <MenuItem href="#zobrazit" $active>Zobrazit</MenuItem>
        <MenuItem href="#nastroje">Nástroje</MenuItem>
        <MenuItem href="#napoveda">Nápověda</MenuItem>
        <Clock>14:24:29 sobota 12. prosince 2009 SEČ</Clock>
      </MenuBar>
      <ToolBar>
        <ToolButton><NewIcon />Nový</ToolButton>
        <ToolButton><FolderIcon />Otevřít</ToolButton>
        <ToolButton><SmsIcon />Psát SMS</ToolButton>
        <ToolButton><EmailIcon />Psát email</ToolButton>
        <ToolButton><ToolsIcon />Nastavení</ToolButton>
        <Spacer $grow={95} />
        <ToolButton><CrossIcon />Konec</ToolButton>
        <Spacer $grow={137} />
        <ToolButton><UserIcon />Přihlášení</ToolButton>
        <MoreButton aria-label="Více možností">
          <Icon size={7}><path d="M2 4h20l-10 16z" fill="#fff" stroke="#999" strokeWidth="2" /></Icon>
        </MoreButton>
      </ToolBar>
      <Logo>
        <span><b>S</b>TORM</span>
        <span><b>E</b>NCOUNTER</span>
      </Logo>
    </Header>
    <Main>
      <Column>
        <RadarPanel />
        <AnimationPanel />
        <PlacesPanel />
      </Column>
      <Column>
        <LightningPanel />
        <RangePanel />
        <NavigationPanel />
      </Column>
    </Main>
    <StatusBar>
      <StatusGroup $flex="409 1 0">
        <SatelliteIcon size={14} />
        8
        <Battery />
        {GPS_FIELDS.map(([value, width]) => (
          <StatusField key={value} $w={width}>{value}</StatusField>
        ))}
      </StatusGroup>
      <StatusGroup $divided $flex="96 1 0">
        <PhoneIcon />
        <StatusField $w={1} $max="62px">Žádné zprávy</StatusField>
      </StatusGroup>
      <StatusGroup $divided $flex="90 1 0">
        <GlobeIcon />
        <StatusField $w={1} $max="58px">Připraveno</StatusField>
      </StatusGroup>
      <StatusGroup $divided>
        <InfoIcon />
      </StatusGroup>
    </StatusBar>
  </Page>
);

export default App;
